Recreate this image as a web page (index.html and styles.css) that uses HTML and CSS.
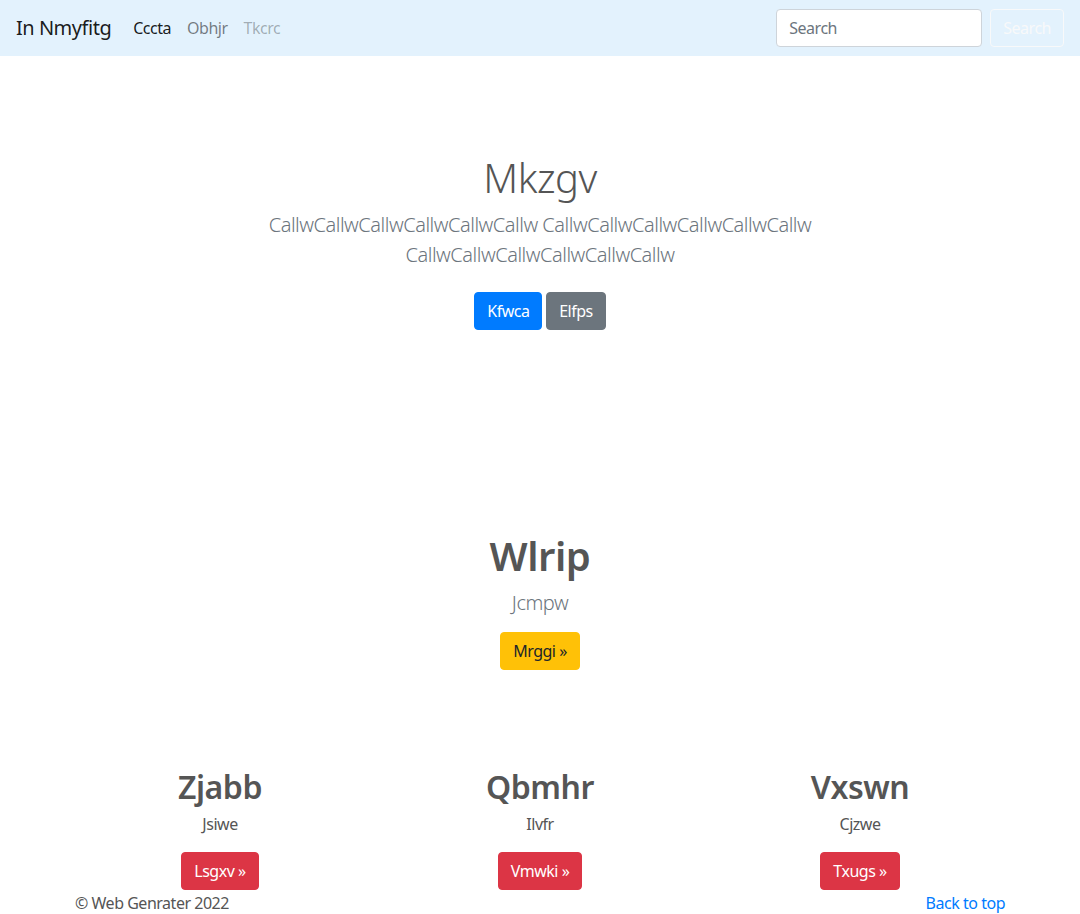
FILE: index.html
```html
<!DOCTYPE html>
<html lang="en">
<head>
<meta charset="utf-8">
<title>In Nmyfitg</title>
<link rel="stylesheet" href="styles.css">
</head>
<body>
<header class="navbar">
  <a class="brand" href="#">In Nmyfitg</a>
  <nav class="nav">
    <a class="nav-link active" href="#">Cccta</a>
    <a class="nav-link" href="#">Obhjr</a>
    <a class="nav-link disabled" href="#">Tkcrc</a>
  </nav>
  <form class="search">
    <input class="search-input" type="text" placeholder="Search">
    <button class="btn btn-outline-light" type="button">Search</button>
  </form>
</header>

<main>
  <section class="hero">
    <h1 class="hero-title">Mkzgv</h1>
    <p class="lead muted hero-lead">CallwCallwCallwCallwCallwCallw CallwCallwCallwCallwCallwCallw CallwCallwCallwCallwCallwCallw</p>
    <p class="hero-actions">
      <a class="btn btn-primary" href="#">Kfwca</a>
      <a class="btn btn-secondary" href="#">Elfps</a>
    </p>
  </section>

  <section class="feature">
    <h1 class="feature-title">Wlrip</h1>
    <p class="lead muted">Jcmpw</p>
    <p><a class="btn btn-warning" href="#">Mrggi &raquo;</a></p>
  </section>

  <section class="cols">
    <div class="col">
      <h2>Zjabb</h2>
      <p>Jsiwe</p>
      <p><a class="btn btn-danger" href="#">Lsgxv &raquo;</a></p>
    </div>
    <div class="col">
      <h2>Qbmhr</h2>
      <p>Ilvfr</p>
      <p><a class="btn btn-danger" href="#">Vmwki &raquo;</a></p>
    </div>
    <div class="col">
      <h2>Vxswn</h2>
      <p>Cjzwe</p>
      <p><a class="btn btn-danger" href="#">Txugs &raquo;</a></p>
    </div>
  </section>
</main>

<footer class="footer">
  <p>&copy; Web Genrater 2022</p>
  <a href="#">Back to top</a>
</footer>
</body>
</html>
```

FILE: styles.css
```css
* { box-sizing: border-box; }
html, body { margin: 0; }
body {
  font-family: "Segoe UI", "Noto Sans", "Open Sans", sans-serif;
  font-size: 16px;
  line-height: 1.5;
  letter-spacing: -0.03em;
  color: #555;
  background: #fff;
  text-align: left;
}
a { text-decoration: none; }
p { margin: 0 0 16px; }
h1, h2 { margin: 0 0 8px; line-height: 1.2; }

.navbar {
  display: flex;
  align-items: center;
  height: 56px;
  padding: 8px 16px;
  background: #e3f2fd;
}
.brand {
  font-size: 20px;
  color: rgba(0,0,0,.9);
  margin-right: 14px;
  line-height: 30px;
}
.nav { display: flex; flex: 1; }
.nav-link { padding: 8px; color: rgba(0,0,0,.5); }
.nav-link.active { color: rgba(0,0,0,.9); }
.nav-link.disabled { color: rgba(0,0,0,.3); }
.search { display: flex; align-items: center; }
.search-input {
  width: 206px;
  height: 38px;
  padding: 6px 12px;
  font: inherit;
  letter-spacing: inherit;
  color: #495057;
  border: 1px solid #ced4da;
  border-radius: 4px;
  margin-right: 8px;
  background: #fff;
}
.search-input::placeholder { color: #6c757d; }

.btn {
  display: inline-block;
  font-family: inherit;
  font-size: 16px;
  letter-spacing: inherit;
  line-height: 24px;
  padding: 6px 12px;
  border: 1px solid transparent;
  border-radius: 4px;
  color: #fff;
  background: transparent;
  vertical-align: middle;
}
.btn-outline-light { color: #f8f9fa; border-color: #f8f9fa; }
.btn-primary { background: #007bff; border-color: #007bff; }
.btn-secondary { background: #6c757d; border-color: #6c757d; }
.btn-warning { background: #ffc107; border-color: #ffc107; color: #212529; }
.btn-danger { background: #dc3545; border-color: #dc3545; }

.muted { color: #6c757d; }
.lead { font-size: 20px; font-weight: 300; line-height: 30px; }

.hero { text-align: center; padding-top: 98px; }
.hero-title { font-size: 40px; font-weight: 300; }
.hero-lead { max-width: 610px; margin-left: auto; margin-right: auto; }
.hero-actions { margin: 0; padding: 6px 0; }

.feature { text-align: center; padding-top: 196px; }
.feature-title { font-size: 40px; font-weight: 600; }
.feature p:last-child { margin-top: -2px; }

.cols {
  display: grid;
  grid-template-columns: repeat(3, 1fr);
  width: 960px;
  margin: 0 auto;
  padding-top: 80px;
  text-align: center;
}
.col { padding: 0 15px; }
.col h2 { font-size: 32px; font-weight: 600; margin: 2px 0 6px; }
.col p:last-child { margin-bottom: 0; }

.footer {
  display: flex;
  justify-content: space-between;
  width: 960px;
  margin: 0 auto;
  padding: 3px 15px 0;
  line-height: 20px;
}
.footer p { margin: 0; }
.footer a { color: #007bff; }
```
